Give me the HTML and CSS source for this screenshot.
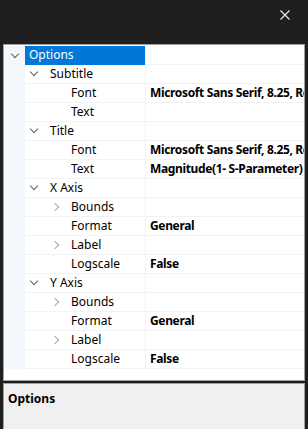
FILE: index.html
```html
<!DOCTYPE html>
<html lang="en">
<head>
  <meta charset="UTF-8" />
  <meta name="viewport" content="width=device-width, initial-scale=1.0"/>
  <title>Options</title>
  <link rel="stylesheet" href="styles.css">
</head>
<body>
  <!-- TITLE BAR -->
  <div class="titlebar">
    <button class="close-btn" aria-label="Close">
      <svg width="10" height="10" viewBox="0 0 10 10">
        <path d="M0.5 0.5 L9.5 9.5 M9.5 0.5 L0.5 9.5" stroke="#e8e8e8" stroke-width="1.2" fill="none"/>
      </svg>
    </button>
  </div>

  <!-- PROPERTY GRID -->
  <div class="grid">
    <div class="rows">
      <div class="row">
        <div class="margin"><span class="chev down"></span></div>
        <div class="name selected lvl0">Options</div>
        <div class="value"></div>
      </div>
      <div class="row">
        <div class="margin"></div>
        <div class="name lvl1"><span class="chev down"></span>Subtitle</div>
        <div class="value"></div>
      </div>
      <div class="row">
        <div class="margin"></div>
        <div class="name lvl2">Font</div>
        <div class="value">Microsoft Sans Serif, 8.25, Regular</div>
      </div>
      <div class="row">
        <div class="margin"></div>
        <div class="name lvl2">Text</div>
        <div class="value"></div>
      </div>
      <div class="row">
        <div class="margin"></div>
        <div class="name lvl1"><span class="chev down"></span>Title</div>
        <div class="value"></div>
      </div>
      <div class="row">
        <div class="margin"></div>
        <div class="name lvl2">Font</div>
        <div class="value">Microsoft Sans Serif, 8.25, Regular</div>
      </div>
      <div class="row">
        <div class="margin"></div>
        <div class="name lvl2">Text</div>
        <div class="value">Magnitude(1- S-Parameter)</div>
      </div>
      <div class="row">
        <div class="margin"></div>
        <div class="name lvl1"><span class="chev down"></span>X Axis</div>
        <div class="value"></div>
      </div>
      <div class="row">
        <div class="margin"></div>
        <div class="name lvl2"><span class="chev right"></span>Bounds</div>
        <div class="value"></div>
      </div>
      <div class="row">
        <div class="margin"></div>
        <div class="name lvl2">Format</div>
        <div class="value">General</div>
      </div>
      <div class="row">
        <div class="margin"></div>
        <div class="name lvl2"><span class="chev right"></span>Label</div>
        <div class="value"></div>
      </div>
      <div class="row">
        <div class="margin"></div>
        <div class="name lvl2">Logscale</div>
        <div class="value">False</div>
      </div>
      <div class="row">
        <div class="margin"></div>
        <div class="name lvl1"><span class="chev down"></span>Y Axis</div>
        <div class="value"></div>
      </div>
      <div class="row">
        <div class="margin"></div>
        <div class="name lvl2"><span class="chev right"></span>Bounds</div>
        <div class="value"></div>
      </div>
      <div class="row">
        <div class="margin"></div>
        <div class="name lvl2">Format</div>
        <div class="value">General</div>
      </div>
      <div class="row">
        <div class="margin"></div>
        <div class="name lvl2"><span class="chev right"></span>Label</div>
        <div class="value"></div>
      </div>
      <div class="row">
        <div class="margin"></div>
        <div class="name lvl2">Logscale</div>
        <div class="value">False</div>
      </div>
    </div>
  </div>

  <!-- HELP PANEL -->
  <div class="help">
    <div class="help-title">Options</div>
  </div>
</body>
</html>
```

FILE: styles.css
```css
* { margin: 0; padding: 0; box-sizing: border-box; }
html, body {
  height: 100%;
  font-family: 'Noto Sans', 'Open Sans', sans-serif;
  font-size: 12px;
  background-color: #1f1f1f;
  color: #000;
  overflow: hidden;
}

body {
  display: flex;
  flex-direction: column;
  padding: 0 3px;
}

.titlebar {
  height: 44px;
  flex-shrink: 0;
  display: flex;
  justify-content: flex-end;
  align-items: flex-start;
}

.close-btn {
  background: none;
  border: none;
  margin-top: 10px;
  margin-right: 15px;
  width: 10px;
  height: 10px;
  cursor: pointer;
}

.close-btn svg { display: block; }

.grid {
  height: 337px;
  flex-shrink: 0;
  background: #fff;
  border: 1px solid #a0a0a0;
  padding-top: 1px;
  overflow: hidden;
}

.row {
  display: grid;
  grid-template-columns: 21px 120px 1fr;
  height: 19px;
}

.margin {
  background: #f3f6fb;
  display: flex;
  align-items: center;
  justify-content: center;
  padding-left: 1px;
}

.name, .value {
  border-bottom: 1px solid #f0f3f8;
  line-height: 18px;
  white-space: nowrap;
  overflow: hidden;
  display: flex;
  align-items: center;
}

.name {
  position: relative;
}

.name.selected {
  background: #0078d7;
  color: #fff;
  border-bottom-color: #0078d7;
}

.lvl0 { padding-left: 4px; }
.lvl1 { padding-left: 6px; }
.lvl2 { padding-left: 46px; }

.value {
  border-left: 1px solid #f0f3f8;
  padding-left: 4px;
  font-weight: bold;
  letter-spacing: -0.35px;
}

.chev {
  display: inline-block;
  width: 6px;
  height: 6px;
  border-right: 1.5px solid #606060;
  border-bottom: 1.5px solid #606060;
}

.chev.down {
  transform: rotate(45deg);
  margin-top: -4px;
}

.lvl1 .chev.down {
  margin-left: 0;
  margin-right: 13px;
}

.chev.right {
  position: absolute;
  left: 27px;
  top: 6px;
  border-color: #a8a8a8;
  transform: rotate(-45deg);
}

.help {
  margin-top: 2px;
  flex: 1;
  background: #f0f0f0;
  border: 1px solid #a0a0a0;
  border-bottom: none;
  padding: 6px 4px;
}

.help-title {
  font-weight: bold;
}
```
